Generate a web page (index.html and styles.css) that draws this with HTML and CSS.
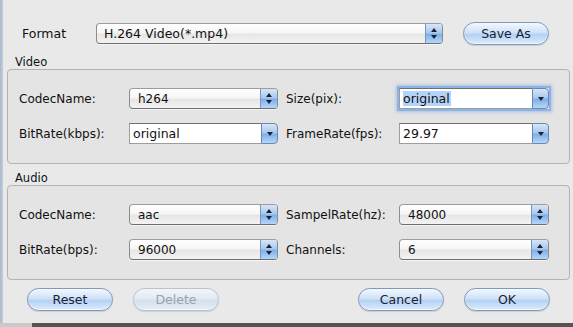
FILE: index.html
```html
<!DOCTYPE html>
<html lang="en">
<head>
  <meta charset="UTF-8">
  <title>Export Settings</title>
  <link rel="stylesheet" href="styles.css">
</head>
<body>
  <div class="dialog">
    <div class="format-row">
      <span class="format-label">Format</span>
      <div class="popup format-popup">
        <span class="popup-text">H.264 Video(*.mp4)</span>
        <span class="stepper"><i class="up"></i><i class="down"></i></span>
      </div>
      <button class="btn save-btn">Save As</button>
    </div>

    <div class="legend">Video</div>
    <div class="group">
      <div class="grid">
        <span class="lbl">CodecName:</span>
        <div class="popup"><span class="popup-text">h264</span><span class="stepper"><i class="up"></i><i class="down"></i></span></div>
        <span class="lbl lbl2">Size(pix):</span>
        <div class="combo focused"><span class="combo-field"><span class="sel">original</span></span><span class="combo-btn"><i class="down"></i></span></div>

        <span class="lbl">BitRate(kbps):</span>
        <div class="combo"><span class="combo-field">original</span><span class="combo-btn"><i class="down"></i></span></div>
        <span class="lbl lbl2">FrameRate(fps):</span>
        <div class="combo"><span class="combo-field">29.97</span><span class="combo-btn"><i class="down"></i></span></div>
      </div>
    </div>

    <div class="legend audio">Audio</div>
    <div class="group">
      <div class="grid">
        <span class="lbl">CodecName:</span>
        <div class="popup"><span class="popup-text">aac</span><span class="stepper"><i class="up"></i><i class="down"></i></span></div>
        <span class="lbl lbl2">SampelRate(hz):</span>
        <div class="popup"><span class="popup-text">48000</span><span class="stepper"><i class="up"></i><i class="down"></i></span></div>

        <span class="lbl">BitRate(bps):</span>
        <div class="popup"><span class="popup-text">96000</span><span class="stepper"><i class="up"></i><i class="down"></i></span></div>
        <span class="lbl lbl2">Channels:</span>
        <div class="popup"><span class="popup-text">6</span><span class="stepper"><i class="up"></i><i class="down"></i></span></div>
      </div>
    </div>

    <div class="button-row">
      <button class="btn">Reset</button>
      <button class="btn disabled">Delete</button>
      <span class="spacer"></span>
      <button class="btn">Cancel</button>
      <button class="btn">OK</button>
    </div>
  </div>
  <div class="under"></div>
</body>
</html>
```

FILE: styles.css
```css
body {
  margin: 0;
  padding: 0;
  width: 573px;
  height: 327px;
  overflow: hidden;
  font-family: 'DejaVu Sans', sans-serif;
  font-size: 12px;
  color: #111;
  background: #e9e9e9;
}

.dialog {
  height: 323px;
  box-sizing: border-box;
  padding: 22px 3px 0 7px;
  background: linear-gradient(to right, #a9b8cc 0, #c4ceda 3px, #e9e9e9 3px);
}

.format-row {
  display: flex;
  align-items: center;
  height: 22px;
}

.format-label {
  width: 74px;
  padding-left: 15px;
  font-size: 12.5px;
}

.format-popup {
  width: 347px;
  height: 22px;
}

.save-btn {
  margin-left: 20px;
  width: 86px;
}

.legend {
  margin: 12px 0 0 8px;
  height: 12px;
  line-height: 12px;
  font-size: 11.5px;
}

.legend.audio {
  margin-top: 8px;
}

.group {
  width: 563px;
  box-sizing: border-box;
  margin-top: 1px;
  padding: 18px 0 19px 10px;
  border: 1px solid #b3b3b3;
  border-radius: 4px;
  background: #e4e4e4;
}

.grid {
  display: grid;
  grid-template-columns: 111px 149px 121px 150px;
  grid-auto-rows: 21px;
  row-gap: 14px;
  align-items: center;
}

.lbl {
  padding-left: 1px;
}

.lbl2 {
  padding-left: 8px;
}

/* pop-up button with the up/down stepper */
.popup {
  display: flex;
  align-items: center;
  height: 21px;
  box-sizing: border-box;
  border: 1px solid #8c8c8c;
  border-top-color: #9c9c9c;
  border-bottom-color: #6e6e6e;
  border-radius: 4px;
  background: linear-gradient(#ffffff, #f6f6f6 45%, #e6e6e6 55%, #f3f3f3);
  box-shadow: 0 1px 0 rgba(255, 255, 255, 0.6);
  overflow: hidden;
}

.popup-text {
  flex: 1;
  padding-left: 8px;
  white-space: nowrap;
}

.format-popup .popup-text {
  padding-left: 7px;
  font-size: 12.5px;
}

.stepper,
.combo-btn {
  position: relative;
  width: 17px;
  height: 100%;
  box-sizing: border-box;
  background: linear-gradient(#d7e6f8, #a9c9ef 45%, #7fb0ea 55%, #b5d6fa);
}

.stepper {
  border-left: 1px solid #7e96b5;
}

.stepper i,
.combo-btn i {
  position: absolute;
  left: 50%;
  margin-left: -3px;
  width: 0;
  height: 0;
  border-left: 3px solid transparent;
  border-right: 3px solid transparent;
}

.stepper .up {
  top: 4px;
  border-bottom: 4px solid #1c2230;
}

.stepper .down {
  bottom: 4px;
  border-top: 4px solid #1c2230;
}

.combo-btn .down {
  top: 50%;
  margin-top: -2px;
  border-top: 4px solid #1c2230;
}

/* editable combo box */
.combo {
  display: flex;
  height: 21px;
}

.combo-field {
  flex: 1;
  display: flex;
  align-items: center;
  padding-left: 3px;
  background: #fff;
  border: 1px solid #9d9d9d;
  border-top-color: #6f6f6f;
  border-right: none;
  font-size: 12.5px;
}

.combo-btn {
  border: 1px solid #6f87a8;
  border-radius: 0 4px 4px 0;
}

.focused {
  box-shadow: 0 0 0 2px #8cb4e6, 0 0 3px 3px rgba(110, 160, 225, 0.5);
}

.sel {
  background: #b4d3f8;
  padding-right: 1px;
}

/* aqua push buttons */
.btn {
  height: 23px;
  width: 86px;
  padding: 0;
  border: 1px solid #8099bb;
  border-radius: 12px;
  background: linear-gradient(#f3f8fe, #cfe2f8 45%, #b4d2f4 55%, #dcebfc);
  box-shadow: inset 0 -1px 1px rgba(255, 255, 255, 0.7), 0 1px 1px rgba(0, 0, 0, 0.12);
  font-family: 'DejaVu Sans', sans-serif;
  font-size: 12.5px;
  color: #1a2233;
  cursor: pointer;
}

.btn.disabled {
  color: #98a2ae;
  border-color: #b4c3d6;
  background: linear-gradient(#f3f6fa, #e1e9f2 45%, #d5e0ec 55%, #e6edf5);
}

.button-row {
  display: flex;
  align-items: center;
  gap: 20px;
  margin-top: 8px;
  padding: 0 20px 0 20px;
}

.spacer {
  flex: 1;
}

.under {
  height: 4px;
  background: linear-gradient(to right, #c9c9c9 0, #c9c9c9 32px, #545454 32px);
}
```
